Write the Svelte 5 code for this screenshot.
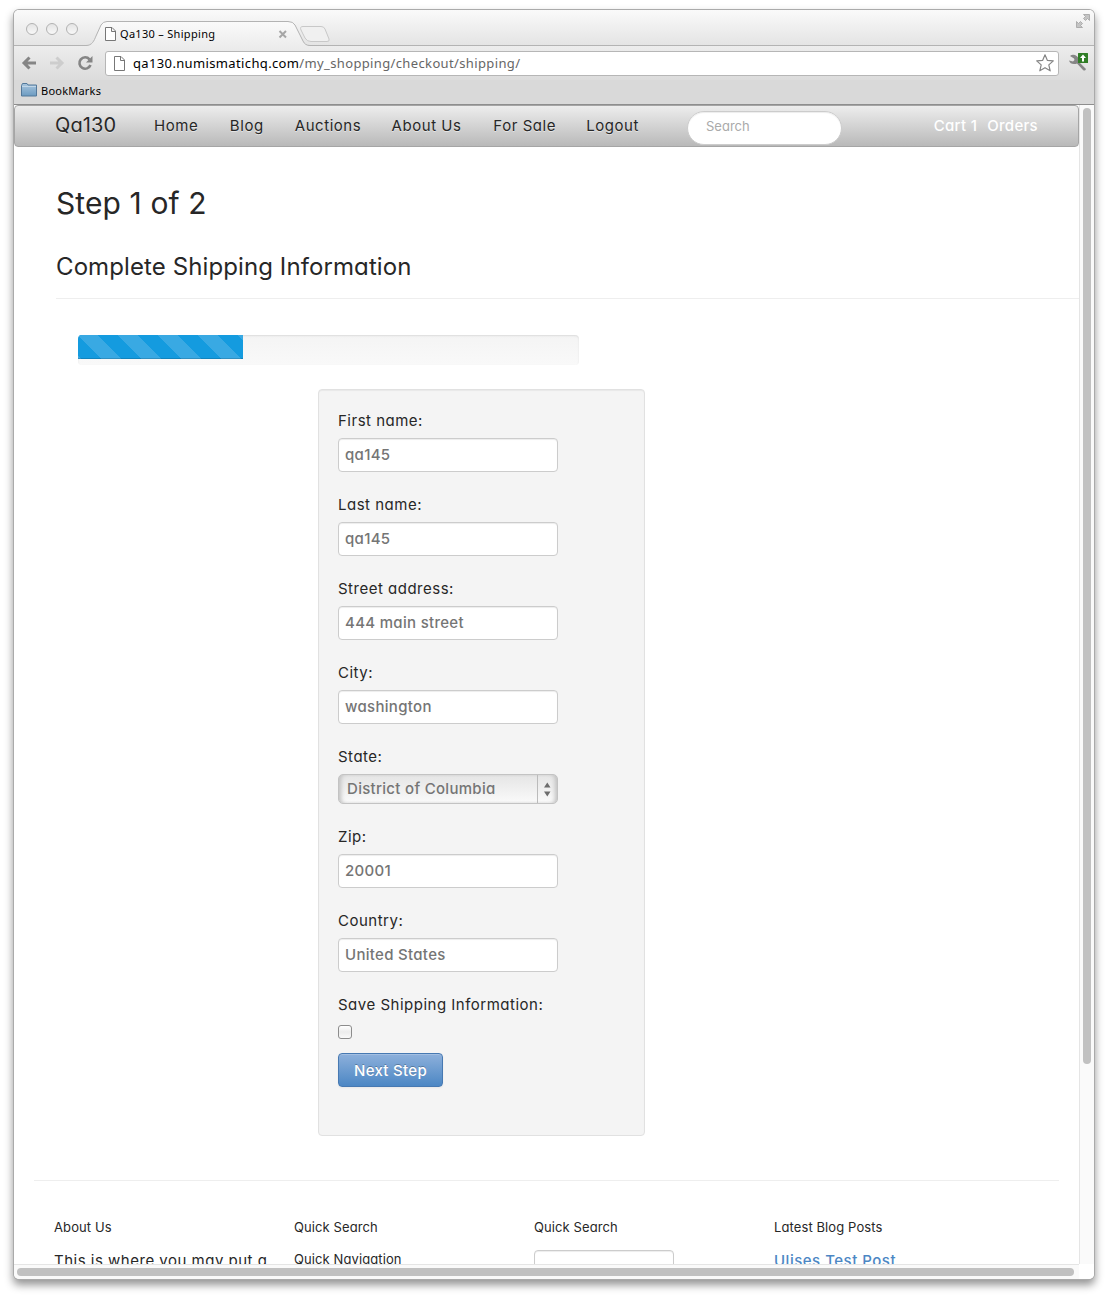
<script>
  const nav = [
    { text: 'Home', w: 76 }, { text: 'Blog', w: 65 }, { text: 'Auctions', w: 97 },
    { text: 'About Us', w: 102 }, { text: 'For Sale', w: 93 }, { text: 'Logout', w: 101 },
  ];
  const fields = [
    { label: 'First name:', value: 'qa145' },
    { label: 'Last name:', value: 'qa145' },
    { label: 'Street address:', value: '444 main street' },
    { label: 'City:', value: 'washington' },
    { label: 'State:', value: 'District of Columbia', select: true },
    { label: 'Zip:', value: '20001' },
    { label: 'Country:', value: 'United States' },
  ];
</script>

<div class="desktop">
  <div class="window">
    <div class="titlebar">
      <div class="lights"><i></i><i></i><i></i></div>
      <svg class="tabs" width="250" height="36" viewBox="0 0 250 36">
        <defs>
          <linearGradient id="tabfill" x1="0" y1="0" x2="0" y2="1"><stop offset="0" stop-color="#fafafa" /><stop offset="1" stop-color="#ededed" /></linearGradient>
        </defs>
        <path d="M0 35.5 C7 35 8 31 10 26 L15 15 Q17 11.500 21 11.500 H202 Q207 11.500 209 15 L217 31 Q219 35.500 224 35.500 V36 H0Z" fill="url(#tabfill)" />
        <path d="M0 35.500 C6 35.500 8 31 10 26 L15 15 Q17 11.500 21 11.500 H202 Q207 11.500 209 15 L217 31 Q219 35.500 224 35.500" fill="none" stroke="#b3b3b3" />
        <path d="M217 16.500 H235 Q238 16.500 239 19 L243 29 Q244 31.500 241 31.500 H225 Q221 31.500 219 28 L215 20 Q213.500 16.500 217 16.500Z" fill="#f0f0f0" stroke="#c8c8c8" />
        <path d="M19.500 17.500 H26 L29.500 21 V30.500 H19.500Z M25.500 17.500 V21.500 H29.500" fill="#fff" stroke="#777" />
        <text x="34" y="28" class="tabtext" textLength="95">Qa130 – Shipping</text>
        <path d="M193.500 21 L200 27.500 M200 21 L193.500 27.500" stroke="#a6a6a6" stroke-width="2" />
      </svg>
      <svg class="fullscreen" width="14" height="14" viewBox="0 0 14 14" fill="#c4c4c4" stroke="#a2a2a2" stroke-width=".8">
        <path d="M7.500 .5H13.500V6.500L11.500 4.500L9.500 6.500L7.500 4.500L9.500 2.500Z M.5 7.500L2.500 9.500L4.500 7.500L6.500 9.500L4.500 11.500L6.500 13.500H.5Z" />
      </svg>
    </div>
    <div class="toolbar">
      <svg width="82" height="24" viewBox="0 0 82 24" fill="none">
        <path d="M17 12H5M10.500 6.500L5 12L10.500 17.500" stroke="#858585" stroke-width="3" />
        <path d="M31 12H43M37.500 6.500L43 12L37.500 17.500" stroke="#cdcdcd" stroke-width="3" />
        <path d="M70.500 8.300A5.700 5.700 0 1 0 71.500 14" stroke="#858585" stroke-width="2.600" />
        <path d="M73.500 5V11.500H67Z" fill="#858585" />
      </svg>
      <div class="address">
        <svg width="12" height="15" viewBox="0 0 12 15"><path d="M.5.500H7L10.500 4V14.500H.5Z M6.500.500V4.500H10.500" fill="#fff" stroke="#777" /></svg>
        <svg class="url" width="400" height="22"><text x="0" y="16" textLength="387">qa130.numismatichq.com<tspan>/my_shopping/checkout/shipping/</tspan></text></svg>
        <svg width="20" height="20" viewBox="0 0 20 20"><path d="M10 1.800L12.300 7.300L18.300 7.900L13.800 11.900L15.200 17.800L10 14.700L4.800 17.800L6.200 11.900L1.700 7.900L7.700 7.300Z" fill="#fff" stroke="#858585" stroke-width="1.200" stroke-linejoin="round" /></svg>
      </div>
      <svg class="wrench" width="22" height="20" viewBox="0 0 22 20">
        <path d="M2 3L6 5.500L6.500 7L5 8.500L1 7.500Q2 11 6 11Q8 11 9 10.500L15 17Q17 18.500 18 16L11 9Q11.500 4 7 2Q4 1 2 3Z" fill="#858585" />
        <rect x="10" y="0" width="10" height="10" rx=".5" fill="#2f7d25" /><path d="M15 1.500L18 5H16V8.500H14V5H12Z" fill="#fff" />
      </svg>
    </div>
    <div class="bookmarks">
      <svg width="16" height="14" viewBox="0 0 16 14">
        <defs><linearGradient id="folder" x1="0" y1="0" x2="0" y2="1"><stop offset="0" stop-color="#a9c6de" /><stop offset="1" stop-color="#6c9bc1" /></linearGradient></defs>
        <path d="M.5 13V2.500L1.500 .5H6L7 2H15.500V13Z" fill="url(#folder)" stroke="#53789a" /><path d="M1 3.500H15" stroke="#c1d6e7" />
      </svg>
      <svg width="70" height="16"><text x="0" y="11.500" class="tabtext" textLength="60">BookMarks</text></svg>
    </div>

    <div class="viewport">
      <div class="page">
        <nav>
          <span class="brand">Qa130</span>
          <div class="links">{#each nav as item}<span style:width="{item.w}px">{item.text}</span>{/each}</div>
          <div class="search">Search</div>
          <div class="account"><span>Cart 1</span><span>Orders</span></div>
        </nav>
        <header>
          <h1>Step 1 of 2</h1>
          <h2>Complete Shipping Information</h2>
        </header>
        <div class="progress"><div class="bar"></div></div>
        <form class="well">
          {#each fields as f}
            <div class="group">
              <span class="label">{f.label}</span>
              {#if f.select}
                <div class="select"><span>{f.value}</span>
                  <svg width="20" height="28" viewBox="0 0 20 28"><path d="M.5 0V28" stroke="#bbb" /><path d="M7 12.500L10.300 7.500L13.500 12.500ZM7 16.500H13.500L10.300 21.500Z" fill="#6d6d6d" /></svg>
                </div>
              {:else}
                <div class="input">{f.value}</div>
              {/if}
            </div>
          {/each}
          <span class="label">Save Shipping Information:</span>
          <div class="checkbox"></div>
          <button type="button">Next Step</button>
        </form>
        <footer>
          <div><h4>About Us</h4><p>This is where you may put a</p></div>
          <div><h4>Quick Search</h4><h4 class="second">Quick Navigation</h4></div>
          <div><h4>Quick Search</h4><div class="quick"></div></div>
          <div><h4>Latest Blog Posts</h4><p class="post">Ulises Test Post</p></div>
        </footer>
      </div>
      <div class="vscroll"><i></i></div>
      <div class="hscroll"><i></i></div>
      <div class="corner"></div>
    </div>
  </div>
</div>

<style>
  :global(body) { margin: 0; background: #fff; }
  .desktop { box-sizing: border-box; width: 1108px; height: 1299px; padding: 10px 14px 20px; overflow: hidden; }
  .window { width: 1080px; height: 1269px; border-radius: 5px; overflow: hidden; display: flex; flex-direction: column; background: #fff; box-shadow: 0 0 0 1px #aaa, 0 5px 9px 1px rgba(0,0,0,.42); font-family: Inter, "Open Sans", sans-serif; font-feature-settings: "cv11"; color: #272727; }
  .titlebar { height: 36px; flex: none; box-sizing: border-box; display: flex; border-bottom: 1px solid #b3b3b3; background: linear-gradient(#fafafa, #e4e4e4); }
  .lights { display: flex; gap: 8px; padding: 13px 0 0 12px; width: 60px; }
  .lights i { width: 10px; height: 10px; border: 1px solid #b2b2b2; border-radius: 50%; background: linear-gradient(#e4e4e4, #f8f8f8); }
  .tabs { flex: none; }
  .fullscreen { margin: 4px 4px 0 auto; }
  .tabtext { font: 11px "Noto Sans", sans-serif; fill: #000; }
  .toolbar { height: 34px; flex: none; display: flex; align-items: center; padding-left: 5px; background: linear-gradient(#ededed, #dcdcdc); }
  .toolbar > svg { flex: none; }
  .address { box-sizing: border-box; width: 954px; height: 25px; margin-left: 4px; border: 1px solid #b6b6b6; border-radius: 3px; background: #fff; display: flex; align-items: center; padding: 0 3px 0 8px; }
  .url { margin: 0 auto 0 7px; font: 13px "Noto Sans", sans-serif; }
  .url tspan { fill: #666; }
  .wrench { margin: -1px 0 0 9px; }
  .bookmarks { height: 25px; flex: none; box-sizing: border-box; border-bottom: 1px solid #8e8e8e; background: #d9d9d9; display: flex; padding: 3px 7px; gap: 4px; }
  .viewport { flex: 1; min-height: 0; display: grid; grid-template: minmax(0, 1fr) 15px / 1065px 15px; }
  .page { overflow: hidden; display: flex; flex-direction: column; }
  nav { flex: none; box-sizing: border-box; height: 42px; display: flex; border: 1px solid #a5a5a5; border-radius: 4px; background: linear-gradient(#ededed, #b9b9b9); padding-left: 40px; line-height: 40px; text-shadow: 0 1px 0 rgba(255,255,255,.5); }
  .brand { width: 99px; font-size: 20px; letter-spacing: .1px; line-height: 39px; }
  .links { display: flex; width: 533px; font-size: 15px; letter-spacing: .55px; }
  .links span { white-space: nowrap; }
  .search { box-sizing: border-box; width: 155px; height: 34px; margin-top: 5px; border: 1px solid #ccc; border-radius: 17px; background: #fff; padding-left: 18px; color: #aaa; font-size: 13px; line-height: 28px; box-shadow: inset 0 1px 1px rgba(0,0,0,.075); }
  .account { display: flex; gap: 10px; margin: 0 40px 0 auto; color: #fff; font-size: 15px; font-weight: 500; letter-spacing: .3px; text-shadow: none; }
  header { flex: none; box-sizing: border-box; height: 152px; margin-left: 42px; padding-top: 34px; border-bottom: 1px solid #eee; }
  h1, h2, h4, p { margin: 0; font-weight: 400; white-space: nowrap; }
  h1 { font-size: 30px; line-height: 44px; letter-spacing: .1px; }
  h2 { font-size: 24px; line-height: 36px; margin-top: 24px; letter-spacing: .1px; }
  .progress { flex: none; width: 501px; height: 30px; margin: 36px 0 0 64px; overflow: hidden; border-radius: 4px; background: linear-gradient(#f4f4f4, #f9f9f9); box-shadow: inset 0 1px 2px rgba(0,0,0,.1); }
  .bar { width: 165px; height: 24px; background: linear-gradient(45deg, rgba(255,255,255,.15) 25%, transparent 25%, transparent 50%, rgba(255,255,255,.15) 50%, rgba(255,255,255,.15) 75%, transparent 75%) 0 0 / 40px 40px #149bdf; background-image: linear-gradient(45deg, #39a9e3 25%, transparent 25%, transparent 50%, #39a9e3 50%, #39a9e3 75%, transparent 75%); box-shadow: inset 0 -1px 0 rgba(0,0,0,.15); }
  .well { flex: none; box-sizing: border-box; width: 327px; height: 747px; margin: 24px 0 0 304px; padding: 19px; border: 1px solid #e1e1e1; border-radius: 4px; background: #f4f4f4; box-shadow: inset 0 1px 1px rgba(0,0,0,.05); }
  .group { margin-bottom: 21px; }
  .label { display: block; height: 24px; margin-bottom: 5px; font-size: 15px; line-height: 24px; letter-spacing: .5px; white-space: nowrap; }
  .input, .select { box-sizing: border-box; width: 220px; height: 34px; padding-left: 6px; border: 1px solid #ccc; border-radius: 4px; background: #fff; box-shadow: inset 0 1px 1px rgba(0,0,0,.075); color: #757575; font-size: 15px; line-height: 32px; font-weight: 500; letter-spacing: .3px; }
  .select { display: flex; justify-content: space-between; height: 30px; padding-left: 8px; line-height: 27px; background: linear-gradient(#e5e5e5, #fafafa); border-color: #c3c3c3; border-radius: 5px; box-shadow: inset 4px 0 4px -2px #c0c0c0, inset -4px 0 4px -2px #c0c0c0; }
  .checkbox { box-sizing: border-box; width: 14px; height: 14px; margin: 8px 0 14px; border: 1px solid #8c8c8c; border-radius: 3px; background: linear-gradient(#fff, #ececec 50%, #f9f9f9); }
  button { display: block; width: 105px; height: 34px; padding: 0; border: 1px solid #4779b2; border-radius: 4px; background: linear-gradient(#8db0db, #4c87c4); box-shadow: inset 0 1px 0 rgba(255,255,255,.2), 0 1px 2px rgba(0,0,0,.05); color: #fff; font: 500 15px Inter, sans-serif; font-feature-settings: "cv11"; letter-spacing: .3px; text-shadow: 0 -1px 0 rgba(0,0,0,.25); }
  footer { flex: none; width: 1005px; margin: 44px 0 0 20px; padding: 36px 0 0 20px; border-top: 1px solid #eee; display: grid; grid-template-columns: repeat(4, 240px); }
  h4 { font-size: 13px; line-height: 20px; letter-spacing: .1px; }
  .second { margin-top: 12px; }
  p { font-size: 15px; line-height: 24px; margin-top: 12px; letter-spacing: .5px; }
  .post { color: #4c87c4; font-weight: 500; }
  .quick { box-sizing: border-box; width: 140px; height: 34px; margin-top: 13px; border: 1px solid #ccc; border-radius: 4px; box-shadow: inset 0 1px 1px rgba(0,0,0,.075); }
  .vscroll, .hscroll { background: #fafafa; box-sizing: border-box; }
  .vscroll { border-left: 1px solid #e5e5e5; padding: 3px 3px 0; }
  .vscroll i { display: block; width: 8px; height: 956px; border-radius: 4px; background: #c1c1c1; }
  .hscroll { border-top: 1px solid #e5e5e5; padding: 3px; }
  .hscroll i { display: block; width: 1057px; height: 8px; border-radius: 4px; background: #c1c1c1; }
  .corner { background: #fff; }
</style>
